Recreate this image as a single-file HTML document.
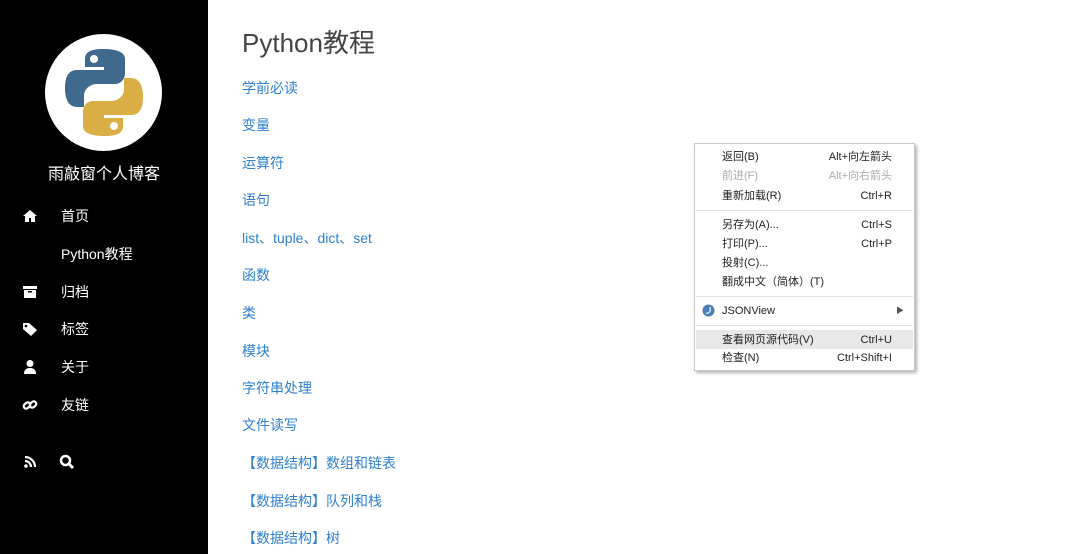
<!DOCTYPE html>
<html><head><meta charset="utf-8"><style>
*{margin:0;padding:0;box-sizing:border-box}
body{width:1080px;height:554px;overflow:hidden;background:#fff;font-family:"Liberation Sans","Noto Sans CJK SC",sans-serif;position:relative}
.side{position:absolute;left:0;top:0;width:208px;height:554px;background:#000;color:#fff}
.logo{position:absolute;left:45px;top:34px;width:117px;height:117px;border-radius:50%;background:#fff}
.title{position:absolute;left:0;width:208px;top:160px;text-align:center;font-size:16px}
.nav{position:absolute;left:61px;font-size:14px;transform:translateY(-50%)}
.ic{position:absolute;left:22px;width:16px;height:16px;transform:translateY(-50%)}
h1{position:absolute;left:242px;top:23px;font-size:26px;font-weight:normal;color:#444}
.l{position:absolute;left:242px;font-size:14px;color:#2d7fcf;transform:translateY(-50%)}
.menu{position:absolute;left:694px;top:143px;width:221px;height:228px;background:#fff;border:1px solid #c8c8c8;box-shadow:2px 2px 3px rgba(0,0,0,.3);font-size:11px;color:#222}
.mi{position:absolute;left:27px;right:22px;transform:translateY(-50%);display:flex;justify-content:space-between;line-height:14px}
.sep{position:absolute;left:1px;right:1px;height:1px;background:#e4e4e4}
</style></head><body>
<div class="side">
<div class="logo"><svg width="117" height="117" viewBox="0 0 117 117">
<path d="M58 15c-14 0-18 4-18 10v8h19v3H32c-8 0-12 6-12 18s4 19 12 19h7V62c0-7 6-12 13-12h18c6 0 10-5 10-11V25c0-6-6-10-22-10z" fill="#3f6a8e"/>
<circle cx="49" cy="25" r="4" fill="#fff"/>
<path d="M60 102c14 0 18-4 18-10v-8H59v-3h27c8 0 12-6 12-18s-4-19-12-19h-7v11c0 7-6 12-13 12H48c-6 0-10 5-10 11v14c0 6 6 10 22 10z" fill="#d9ae45"/>
<circle cx="69" cy="92" r="4" fill="#fff"/>
</svg></div>
<div class="title">雨敲窗个人博客</div>
<svg class="ic" style="top:216px" viewBox="0 0 16 16"><path d="M8 2 1 8h2v6h4v-4h2v4h4V8h2z" fill="#fff"/></svg>
<div class="nav" style="top:216px">首页</div>
<div class="nav" style="top:254px">Python教程</div>
<svg class="ic" style="top:292px" viewBox="0 0 16 16"><rect x="1" y="2" width="14" height="3" fill="#fff"/><rect x="2" y="6" width="12" height="8" fill="#fff"/><rect x="6" y="7" width="4" height="1.5" fill="#000"/></svg>
<div class="nav" style="top:292px">归档</div>
<svg class="ic" style="top:329px" viewBox="0 0 16 16"><path d="M1 2h6l8 7-6 6-8-7z" fill="#fff"/><circle cx="4" cy="5" r="1.3" fill="#000"/></svg>
<div class="nav" style="top:329px">标签</div>
<svg class="ic" style="top:367px" viewBox="0 0 16 16"><circle cx="8" cy="4.5" r="3.5" fill="#fff"/><path d="M2 15c0-5 3-6 6-6s6 1 6 6z" fill="#fff"/></svg>
<div class="nav" style="top:367px">关于</div>
<svg class="ic" style="top:405px" viewBox="0 0 16 16"><g fill="none" stroke="#fff" stroke-width="2.2"><rect x="1.5" y="6" width="7" height="5" rx="2.5" transform="rotate(-40 5 8.5)"/><rect x="7.5" y="5" width="7" height="5" rx="2.5" transform="rotate(-40 11 7.5)"/></g></svg>
<div class="nav" style="top:405px">友链</div>
<svg class="ic" style="top:462px" viewBox="0 0 16 16"><g fill="none" stroke="#fff" stroke-width="2.2"><path d="M3 3a10 10 0 0 1 10 10"/><path d="M3 7a6 6 0 0 1 6 6"/></g><circle cx="4" cy="12" r="1.8" fill="#fff"/></svg>
<svg class="ic" style="top:462px;left:59px" viewBox="0 0 16 16"><circle cx="6.5" cy="6.5" r="4.5" fill="none" stroke="#fff" stroke-width="2.5"/><path d="M10 10l4 4" stroke="#fff" stroke-width="3"/></svg>
</div>
<h1>Python教程</h1>
<div class="l" style="top:88px">学前必读</div>
<div class="l" style="top:125px">变量</div>
<div class="l" style="top:163px">运算符</div>
<div class="l" style="top:200px">语句</div>
<div class="l" style="top:238px">list、tuple、dict、set</div>
<div class="l" style="top:275px">函数</div>
<div class="l" style="top:313px">类</div>
<div class="l" style="top:351px">模块</div>
<div class="l" style="top:388px">字符串处理</div>
<div class="l" style="top:425px">文件读写</div>
<div class="l" style="top:463px">【数据结构】数组和链表</div>
<div class="l" style="top:501px">【数据结构】队列和栈</div>
<div class="l" style="top:538px">【数据结构】树</div>
<div class="menu">
<div class="mi" style="top:13px"><b style="font-weight:normal">返回(B)</b><b style="font-weight:normal">Alt+向左箭头</b></div>
<div class="mi" style="top:32px;color:#aaa"><b style="font-weight:normal">前进(F)</b><b style="font-weight:normal">Alt+向右箭头</b></div>
<div class="mi" style="top:52px"><b style="font-weight:normal">重新加载(R)</b><b style="font-weight:normal">Ctrl+R</b></div>
<div class="sep" style="top:66px"></div>
<div class="mi" style="top:81px"><b style="font-weight:normal">另存为(A)...</b><b style="font-weight:normal">Ctrl+S</b></div>
<div class="mi" style="top:100px"><b style="font-weight:normal">打印(P)...</b><b style="font-weight:normal">Ctrl+P</b></div>
<div class="mi" style="top:119px">投射(C)...</div>
<div class="mi" style="top:138px">翻成中文（简体）(T)</div>
<div class="sep" style="top:152px"></div>
<svg style="position:absolute;left:7px;top:160px" width="13" height="13" viewBox="0 0 13 13"><circle cx="6.5" cy="6.5" r="6" fill="#4a7fb5"/><path d="M4 9c3 1 5-2 4-6" stroke="#cde" stroke-width="1.5" fill="none"/></svg>
<div class="mi" style="top:167px"><b style="font-weight:normal">JSONView</b><b style="font-weight:normal;font-size:8px;margin-right:-12px;color:#555">▶</b></div>
<div class="sep" style="top:181px"></div>
<div style="position:absolute;left:1px;right:1px;top:186px;height:19px;background:#e8e8e8"></div>
<div class="mi" style="top:196px"><b style="font-weight:normal">查看网页源代码(V)</b><b style="font-weight:normal">Ctrl+U</b></div>
<div class="mi" style="top:214px"><b style="font-weight:normal">检查(N)</b><b style="font-weight:normal">Ctrl+Shift+I</b></div>
</div>
</body></html>
